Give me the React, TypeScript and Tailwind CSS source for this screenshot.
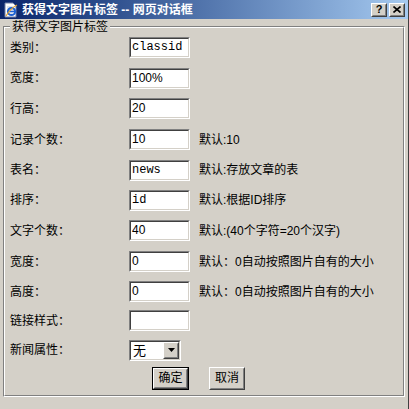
import React from "react";

type Row = {
  label: string;
  value?: string;
  mono?: boolean;
  hint?: string;
  select?: boolean;
  h: string;
};

const rows: Row[] = [
  { label: "类别：", value: "classid", mono: true, h: "h-[31px]" },
  { label: "宽度：", value: "100%", h: "h-[30px]" },
  { label: "行高：", value: "20", h: "h-[31px]" },
  { label: "记录个数：", value: "10", hint: "默认:10", h: "h-[31px]" },
  { label: "表名：", value: "news", mono: true, hint: "默认:存放文章的表", h: "h-[30px]" },
  { label: "排序：", value: "id", mono: true, hint: "默认:根据ID排序", h: "h-[30px]" },
  { label: "文字个数：", value: "40", hint: "默认:(40个字符=20个汉字)", h: "h-[31px]" },
  { label: "宽度：", value: "0", hint: "默认：0自动按照图片自有的大小", h: "h-[31px]" },
  { label: "高度：", value: "0", hint: "默认：0自动按照图片自有的大小", h: "h-[29px]" },
  { label: "链接样式：", value: "", h: "h-[29px]" },
  { label: "新闻属性：", select: true, h: "h-[30px]" },
];

const cjk = "font-['Liberation_Sans','Noto_Sans_CJK_SC',sans-serif]";

function Sunken({ children, className }: { children: React.ReactNode; className: string }) {
  return (
    <div className={`border border-t-[#808080] border-l-[#808080] border-r-white border-b-white ${className}`}>
      <div className="flex h-full w-full border border-t-[#404040] border-l-[#404040] border-r-[#d4d0c8] border-b-[#d4d0c8] bg-white">
        {children}
      </div>
    </div>
  );
}

function Raised({ children, className }: { children: React.ReactNode; className: string }) {
  return (
    <div className={`border border-t-white border-l-white border-r-[#404040] border-b-[#404040] bg-[#d4d0c8] ${className}`}>
      <div className="flex h-full w-full items-center justify-center border border-t-[#d4d0c8] border-l-[#d4d0c8] border-r-[#808080] border-b-[#808080]">
        {children}
      </div>
    </div>
  );
}

export default function App() {
  return (
    <div className={`flex h-[409px] w-[409px] flex-col overflow-hidden border-r border-r-[#404040] bg-[#d4d0c8] text-[12px] text-black ${cjk}`}>
      {/* title bar */}
      <div className="flex h-[19px] shrink-0 items-center bg-gradient-to-r from-[#0a246a] to-[#a6caf0] pl-[3px] pr-[3px]">
        <svg width="16" height="16" viewBox="0 0 16 16" className="shrink-0">
          <path d="M2 1h8l3 3v11H2z" fill="#fff" stroke="#6f7fa8" />
          <path d="M4 5h6M4 7h7M4 9h7M4 11h7" stroke="#b8c6e0" />
          <circle cx="8.5" cy="9.5" r="3.6" fill="none" stroke="#1c62d4" strokeWidth="2" />
          <path d="M5 9.5h7" stroke="#1c62d4" strokeWidth="1.4" />
          <path d="M3 14c3-5 7-9 11-11" stroke="#e0a030" strokeWidth="1.2" fill="none" />
        </svg>
        <span className="ml-[3px] whitespace-nowrap font-bold leading-none text-white">
          获得文字图片标签 -- 网页对话框
        </span>
        <div className="ml-auto flex gap-[2px]">
          <Raised className="h-[14px] w-[16px]">
            <span className="font-['Liberation_Sans',sans-serif] text-[11px] font-bold leading-none">?</span>
          </Raised>
          <Raised className="h-[14px] w-[16px]">
            <svg width="8" height="7" viewBox="0 0 8 7">
              <path d="M0.5 0.5l7 6M7.5 0.5l-7 6" stroke="#000" strokeWidth="1.6" />
            </svg>
          </Raised>
        </div>
      </div>

      {/* body */}
      <div className="px-[3px] pt-[7px]">
        <div className="relative h-[371px] border border-t-[#808080] border-l-[#808080] border-r-white border-b-white">
          <div className="h-full border border-t-white border-l-white border-r-[#808080] border-b-[#808080] pl-[5px] pt-[4px]">
            <span className="absolute -top-[8px] left-[6px] bg-[#d4d0c8] px-[2px] leading-[16px]">
              获得文字图片标签
            </span>
            <div className="flex flex-col">
              {rows.map((r, i) => (
                <div key={i} className={`flex items-center ${r.h}`}>
                  <div className="w-[119px] shrink-0">{r.label}</div>
                  {r.select ? (
                    <Sunken className="h-[21px] w-[52px]">
                      <span className="flex-1 pl-[2px] text-[13px] leading-[17px]">无</span>
                      <Raised className="h-[17px] w-[16px]">
                        <svg width="7" height="4" viewBox="0 0 7 4">
                          <path d="M0 0h7L3.5 4z" fill="#000" />
                        </svg>
                      </Raised>
                    </Sunken>
                  ) : (
                    <Sunken className="h-[21px] w-[61px]">
                      <span
                        className={`pl-[1px] leading-[17px] ${
                          r.mono ? "font-['Liberation_Mono',monospace] text-[12px]" : "font-['Liberation_Sans',sans-serif] text-[12px]"
                        }`}
                      >
                        {r.value}
                      </span>
                    </Sunken>
                  )}
                  {r.hint && <div className="ml-[9px] whitespace-nowrap">{r.hint}</div>}
                </div>
              ))}
              <div className="flex h-[26px] items-center gap-[20px] pl-[142px]">
                <div className="h-[23px] w-[37px] border border-black">
                  <Raised className="h-full w-full">
                    <span>确定</span>
                  </Raised>
                </div>
                <Raised className="h-[23px] w-[36px]">
                  <span>取消</span>
                </Raised>
              </div>
            </div>
          </div>
        </div>
      </div>
    </div>
  );
}
